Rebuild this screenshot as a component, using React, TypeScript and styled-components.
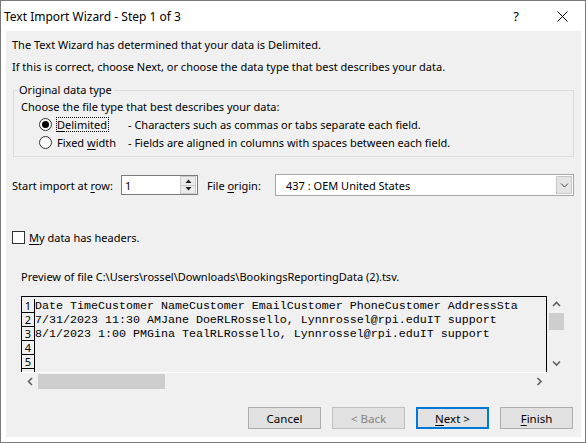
import React from "react";
import styled, { createGlobalStyle } from "styled-components";

const GlobalStyle = createGlobalStyle`
  html, body {
    margin: 0;
    padding: 0;
    background: #ffffff;
  }
  body {
    font-family: "Noto Sans", "Open Sans", sans-serif;
    font-size: 11px;
    color: #000;
  }
  * {
    box-sizing: border-box;
  }
`;

const Window = styled.div`
  width: 586px;
  height: 443px;
  border: 1px solid #7a7a7a;
  background: #ffffff;
  display: flex;
  flex-direction: column;
`;

const TitleBar = styled.div`
  height: 30px;
  flex-shrink: 0;
  display: flex;
  align-items: center;
  padding-left: 3px;
`;

const TitleText = styled.div`
  flex: 1;
  font-size: 12px;
`;

const CaptionButton = styled.div`
  width: 46px;
  height: 30px;
  display: flex;
  align-items: center;
  justify-content: center;
  font-size: 13px;
`;

const Body = styled.div`
  flex: 1;
  margin: 0 4px 5px 5px;
  padding-top: 5px;
  background: #f0f0f0;
  display: flex;
  flex-direction: column;
`;

const Intro = styled.p`
  margin: 0 0 4px;
  padding-left: 6px;
  line-height: 18px;
  white-space: nowrap;
`;

const Group = styled.fieldset`
  margin: 2px 7px 0;
  padding: 0 0 5px 7px;
  border: 1px solid #dcdcdc;
  min-width: 0;
`;

const Legend = styled.legend`
  margin-left: -4px;
  padding: 0 2px;
  line-height: 16px;
`;

const Hint = styled.div`
  line-height: 17px;
`;

const RadioRow = styled.div`
  display: grid;
  grid-template-columns: 89px auto;
  align-items: center;
  height: 18px;
  margin-left: 18px;
`;

const RadioChoice = styled.div`
  display: flex;
  align-items: center;
`;

const RadioDot = styled.span<{ $checked?: boolean }>`
  width: 13px;
  height: 13px;
  border-radius: 50%;
  border: 1px solid #333333;
  background: #ffffff;
  display: flex;
  align-items: center;
  justify-content: center;

  &::after {
    content: "";
    width: 7px;
    height: 7px;
    border-radius: 50%;
    background: ${({ $checked }) => ($checked ? "#000000" : "transparent")};
  }
`;

const ChoiceText = styled.span<{ $focused?: boolean }>`
  margin-left: 4px;
  padding: 0 1px 0 0;
  line-height: 13px;
  border: 1px dotted ${({ $focused }) => ($focused ? "#000000" : "transparent")};
`;

const Key = styled.u`
  text-decoration: underline;
  text-underline-offset: 2px;
`;

const OptionRow = styled.div<{ $top: number }>`
  display: flex;
  align-items: center;
  margin-top: ${({ $top }) => $top}px;
  padding-left: 6px;
  min-height: 18px;
`;

const FieldLabel = styled.span<{ $w: number; $gap?: number }>`
  width: ${({ $w }) => $w}px;
  margin-left: ${({ $gap }) => $gap ?? 0}px;
  flex-shrink: 0;
  white-space: nowrap;
`;

const SpinBox = styled.div`
  width: 77px;
  height: 20px;
  border: 1px solid #7a7a7a;
  background: #ffffff;
  display: flex;
  align-items: center;
`;

const SpinValue = styled.span`
  flex: 1;
  padding-left: 3px;
`;

const SpinButtons = styled.div`
  width: 16px;
  height: 18px;
  margin-right: 1px;
  display: flex;
  flex-direction: column;
  border: 1px solid #cccccc;
  background: #ececec;
`;

const SpinButton = styled.div<{ $top?: boolean }>`
  flex: 1;
  display: flex;
  align-items: center;
  justify-content: center;
  border-bottom: ${({ $top }) => ($top ? "1px solid #cccccc" : "none")};
`;

const Select = styled.div`
  width: 299px;
  height: 22px;
  border: 1px solid #a6a6a6;
  background: #ffffff;
  display: flex;
  align-items: center;
`;

const SelectValue = styled.span`
  flex: 1;
  padding-left: 10px;
`;

const DropButton = styled.div`
  width: 16px;
  height: 18px;
  margin-right: 1px;
  background: #e5e5e5;
  border: 1px solid #c8c8c8;
  display: flex;
  align-items: center;
  justify-content: center;
`;

const CheckBox = styled.span`
  width: 13px;
  height: 13px;
  border: 1px solid #333333;
  background: #ffffff;
  margin-right: 4px;
`;

const PreviewTitle = styled.div`
  margin-top: 22px;
  padding-left: 15px;
  line-height: 18px;
  white-space: nowrap;
`;

const PreviewFrame = styled.div`
  margin: 10px 0 0 15px;
  display: grid;
  grid-template-columns: 526px 18px;
  grid-template-rows: 76px 17px;
  width: 544px;
`;

const DataGrid = styled.div`
  border: 1px solid #000000;
  border-bottom: none;
  padding-top: 2px;
  overflow: hidden;
`;

const DataRow = styled.div`
  display: flex;
  height: 14px;
`;

const RowNumber = styled.div`
  width: 13px;
  flex-shrink: 0;
  border-right: 1px solid #000000;
  border-bottom: 1px solid #000000;
  padding-top: 1px;
  font-size: 11px;
  line-height: 12px;
  text-align: center;
`;

const DataText = styled.div`
  padding-top: 1px;
  font-family: "Liberation Mono", "Courier New", monospace;
  font-size: 11.67px;
  line-height: 13px;
  white-space: pre;
`;

const VScroll = styled.div`
  margin-left: 1px;
  display: flex;
  flex-direction: column;
  align-items: center;
`;

const ScrollArrow = styled.div<{ $w: number; $h: number }>`
  width: ${({ $w }) => $w}px;
  height: ${({ $h }) => $h}px;
  display: flex;
  align-items: center;
  justify-content: center;
  flex-shrink: 0;
`;

const VTrack = styled.div`
  flex: 1;
  width: 15px;
`;

const VThumb = styled.div`
  width: 15px;
  height: 17px;
  background: #cdcdcd;
`;

const HScroll = styled.div`
  margin-left: 1px;
  border-top: 1px solid #ffffff;
  display: flex;
  align-items: center;
`;

const HTrack = styled.div`
  flex: 1;
  height: 15px;
`;

const HThumb = styled.div`
  width: 127px;
  height: 15px;
  background: #cdcdcd;
`;

const ButtonBar = styled.div`
  margin-top: auto;
  padding: 0 8px 8px 0;
  display: flex;
  justify-content: flex-end;
  gap: 11px;
`;

const Button = styled.div<{ $default?: boolean; $disabled?: boolean }>`
  width: 73px;
  height: 22px;
  display: flex;
  align-items: center;
  justify-content: center;
  font-size: 11.5px;
  background: #e1e1e1;
  color: ${({ $disabled }) => ($disabled ? "#838383" : "#000000")};
  border: ${({ $default, $disabled }) =>
    $default ? "2px solid #0078d7" : $disabled ? "1px solid #bfbfbf" : "1px solid #adadad"};
`;

type Dir = "up" | "down" | "left" | "right";

const chevronPoints: Record<Dir, string> = {
  up: "1,5 4.5,1.5 8,5",
  down: "1,1.5 4.5,5 8,1.5",
  left: "5,1 1.5,4.5 5,8",
  right: "1.5,1 5,4.5 1.5,8",
};

const Chevron = ({ dir, color = "#606060", width = 1.6 }: { dir: Dir; color?: string; width?: number }) => {
  const vertical = dir === "up" || dir === "down";
  return (
    <svg width={vertical ? 9 : 7} height={vertical ? 7 : 9} viewBox={vertical ? "0 0 9 7" : "0 0 7 9"}>
      <polyline points={chevronPoints[dir]} fill="none" stroke={color} strokeWidth={width} />
    </svg>
  );
};

const SpinTriangle = ({ up }: { up?: boolean }) => (
  <svg width="7" height="4" viewBox="0 0 7 4">
    <polygon points={up ? "0.5,4 3.5,0.5 6.5,4" : "0.5,0 3.5,3.5 6.5,0"} fill="#222" />
  </svg>
);

const CloseIcon = () => (
  <svg width="11" height="11" viewBox="0 0 11 11">
    <path d="M0.5 0.5 L10.5 10.5 M10.5 0.5 L0.5 10.5" stroke="#000" strokeWidth="1" />
  </svg>
);

// the preview shows five numbered rows, the sixth is only a sliver under the scrollbar
const rows = [
  "Date TimeCustomer NameCustomer EmailCustomer PhoneCustomer AddressSta",
  "7/31/2023 11:30 AMJane DoeRLRossello, Lynnrossel@rpi.eduIT support",
  "8/1/2023 1:00 PMGina TealRLRossello, Lynnrossel@rpi.eduIT support",
  "",
  "",
  "",
];

export default function App() {
  return (
    <>
      <GlobalStyle />
      <Window>
        <TitleBar>
          <TitleText>Text Import Wizard - Step 1 of 3</TitleText>
          <CaptionButton>?</CaptionButton>
          <CaptionButton>
            <CloseIcon />
          </CaptionButton>
        </TitleBar>

        <Body>
          <Intro>The Text Wizard has determined that your data is Delimited.</Intro>
          <Intro>If this is correct, choose Next, or choose the data type that best describes your data.</Intro>

          <Group>
            <Legend>Original data type</Legend>
            <Hint>Choose the file type that best describes your data:</Hint>
            <RadioRow>
              <RadioChoice>
                <RadioDot $checked />
                <ChoiceText $focused>
                  <Key>D</Key>elimited
                </ChoiceText>
              </RadioChoice>
              <span>- Characters such as commas or tabs separate each field.</span>
            </RadioRow>
            <RadioRow>
              <RadioChoice>
                <RadioDot />
                <ChoiceText>
                  Fixed <Key>w</Key>idth
                </ChoiceText>
              </RadioChoice>
              <span>- Fields are aligned in columns with spaces between each field.</span>
            </RadioRow>
          </Group>

          <OptionRow $top={17}>
            <FieldLabel $w={109}>
              Start import at <Key>r</Key>ow:
            </FieldLabel>
            <SpinBox>
              <SpinValue>1</SpinValue>
              <SpinButtons>
                <SpinButton $top>
                  <SpinTriangle up />
                </SpinButton>
                <SpinButton>
                  <SpinTriangle />
                </SpinButton>
              </SpinButtons>
            </SpinBox>
            <FieldLabel $w={68} $gap={9}>
              File <Key>o</Key>rigin:
            </FieldLabel>
            <Select>
              <SelectValue>437 : OEM United States</SelectValue>
              <DropButton>
                <Chevron dir="down" color="#444" width={1} />
              </DropButton>
            </Select>
          </OptionRow>

          <OptionRow $top={32}>
            <CheckBox />
            <span>
              <Key>M</Key>y data has headers.
            </span>
          </OptionRow>

          <PreviewTitle>Preview of file C:\Users\rossel\Downloads\BookingsReportingData (2).tsv.</PreviewTitle>

          <PreviewFrame>
            <DataGrid>
              {rows.map((text, i) => (
                <DataRow key={i}>
                  <RowNumber>{i < 5 ? i + 1 : ""}</RowNumber>
                  <DataText>{text}</DataText>
                </DataRow>
              ))}
            </DataGrid>
            <VScroll>
              <ScrollArrow $w={17} $h={17}>
                <Chevron dir="up" />
              </ScrollArrow>
              <VTrack>
                <VThumb />
              </VTrack>
              <ScrollArrow $w={17} $h={17}>
                <Chevron dir="down" />
              </ScrollArrow>
            </VScroll>
            <HScroll>
              <ScrollArrow $w={16} $h={15}>
                <Chevron dir="left" />
              </ScrollArrow>
              <HTrack>
                <HThumb />
              </HTrack>
              <ScrollArrow $w={16} $h={15}>
                <Chevron dir="right" />
              </ScrollArrow>
            </HScroll>
          </PreviewFrame>

          <ButtonBar>
            <Button>Cancel</Button>
            <Button $disabled>&lt; Back</Button>
            <Button $default>
              <span>
                <Key>N</Key>ext &gt;
              </span>
            </Button>
            <Button>
              <span>
                <Key>F</Key>inish
              </span>
            </Button>
          </ButtonBar>
        </Body>
      </Window>
    </>
  );
}
